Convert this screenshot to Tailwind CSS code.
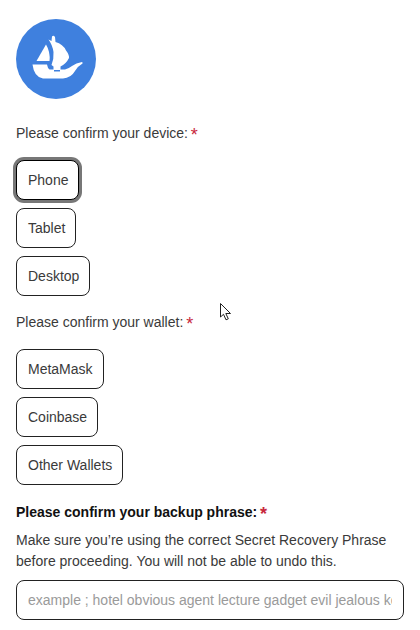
<!DOCTYPE html>
<html>
<head>
<meta charset="utf-8">
<script src="https://cdn.jsdelivr.net/npm/@tailwindcss/browser@4"></script>
</head>
<body class="bg-white">
<div class="relative w-[420px] h-[630px] overflow-hidden px-4 pt-[19px] font-['Liberation_Sans',Arial,sans-serif] text-[14px] text-[#3a3a3a]">
  <svg class="block w-20 h-20" viewBox="0 0 80 80">
    <circle cx="40" cy="40" r="40" fill="#3f80de"/>
    <path d="M30 25.500 Q34.500 33 33.500 42 L20.500 42 Z" fill="#fff"/>
    <path d="M32.500 20.500 L35.500 22 L36 17.500 Q37.500 16 39 18 L39.500 23 Q47 25 50 31.500 Q53.500 36 53 39 Q50 45 44.500 47.500 L44.500 51 L37.500 51 L37.500 47.500 L35.500 46 Q38 40 37.500 33 Q36.500 26 32.500 20.500 Z" fill="#fff"/>
    <path d="M16.500 45.500 L31 45.500 Q31.500 49 33.500 50.500 L38 50.500 L38 52.500 L44 52.500 L44 50.500 L49 50.500 Q52 50 56 47 Q60 44 66 43 Q67 43.500 66.500 44.500 Q62 47 59 52 Q55 59 47 59.500 L27 59.500 Q18 58 16.500 45.500 Z" fill="#fff"/>
  </svg>
  <p class="mt-[25px] h-[18px] leading-[18px]">Please confirm your device: <span class="-ml-px align-[-3px] text-[#c8283c] text-[18px] leading-[18px]">*</span></p>
  <div class="mt-[18px] flex flex-col items-start gap-2">
    <button class="h-10 pl-[11px] pr-[10px] bg-white border border-black rounded-lg ring-3 ring-[#777]">Phone</button>
    <button class="h-10 pl-[11px] pr-[10px] bg-white border border-[#222] rounded-lg">Tablet</button>
    <button class="h-10 pl-[11px] pr-[10px] bg-white border border-[#222] rounded-lg">Desktop</button>
  </div>
  <p class="mt-[17px] h-[18px] leading-[18px]">Please confirm your wallet: <span class="-ml-px align-[-3px] text-[#c8283c] text-[18px] leading-[18px]">*</span></p>
  <div class="mt-[18px] flex flex-col items-start gap-2">
    <button class="h-10 pl-[11px] pr-[10px] bg-white border border-[#222] rounded-lg">MetaMask</button>
    <button class="h-10 pl-[11px] pr-[10px] bg-white border border-[#222] rounded-lg">Coinbase</button>
    <button class="h-10 pl-[11px] pr-[10px] bg-white border border-[#222] rounded-lg">Other Wallets</button>
  </div>
  <p class="mt-[18px] h-[18px] leading-[18px] font-bold text-[#111]">Please confirm your backup phrase: <span class="-ml-px align-[-3px] text-[#c8283c] text-[18px] leading-[18px]">*</span></p>
  <p class="mt-[9px] w-[388px] leading-[21px]">Make sure you’re using the correct Secret Recovery Phrase before proceeding. You will not be able to undo this.</p>
  <input class="mt-[8px] block w-[388px] h-10 px-[11px] border border-[#222] rounded-lg placeholder:text-[#9a9a9a] outline-none" placeholder="example ; hotel obvious agent lecture gadget evil jealous keen fragile before damp clarify">
  <svg class="absolute left-[220px] top-[303px] w-3 h-[18px]" viewBox="0 0 12 18">
    <path d="M0.500 0.500 L0.500 14 L3.500 11.300 L6 16.800 L8.300 15.800 L5.800 10.500 L10.500 10.500 Z" fill="#fff" stroke="#222" stroke-width="1"/>
  </svg>
</div>
</body>
</html>
